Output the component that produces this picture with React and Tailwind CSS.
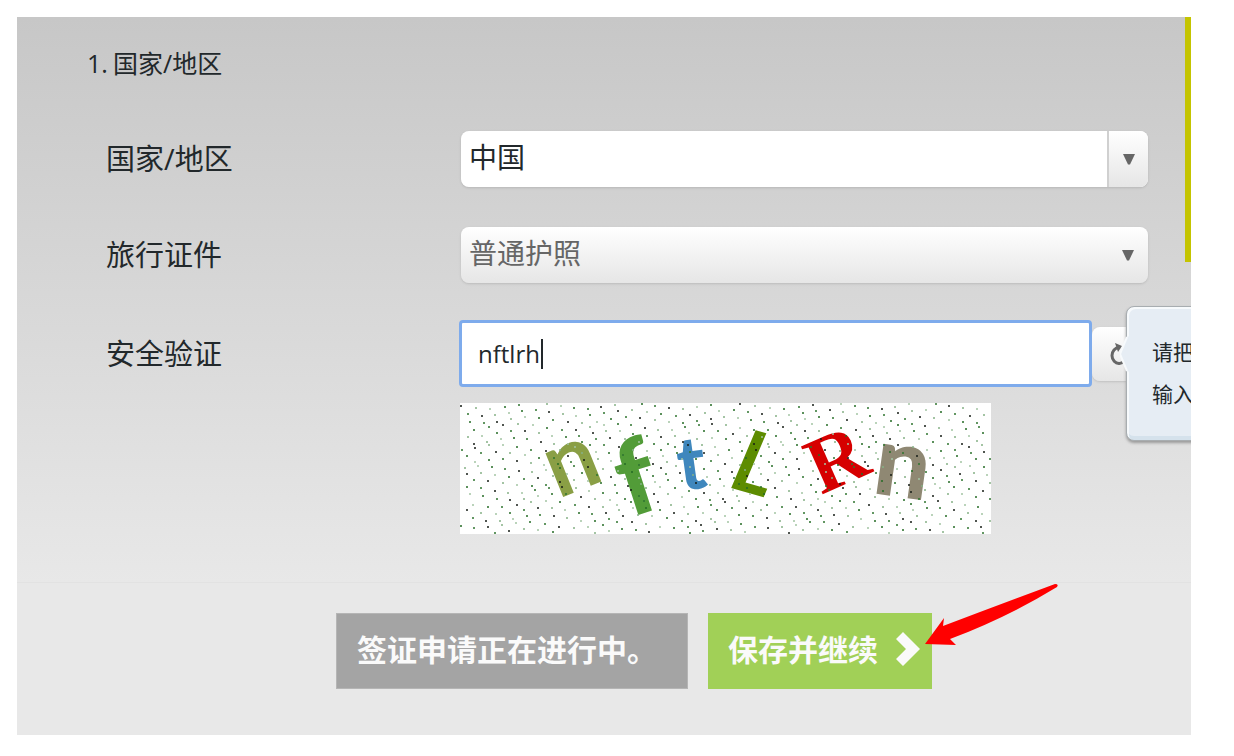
// App.jsx
import { useState } from "react";

/* ================= CAPTCHA ================= */

const LETTERS = [
  { char: "n", x: 98, y: 96, size: 92, angle: -22, color: "#8a9f45", font: "Lato", weight: 700 },
  { char: "f", x: 169, y: 115, size: 104, angle: -18, color: "#529c38", font: "Lato", weight: 900 },
  { char: "t", x: 221, y: 88, size: 74, angle: -8, color: "#3f87bd", font: "Lato", weight: 900 },
  { char: "L", x: 268, y: 84, size: 86, angle: 16, color: "#5d8c00", font: "Lato", weight: 700, italic: true },
  { char: "R", x: 361, y: 92, size: 80, angle: -24, color: "#d60000", font: "Liberation Serif", weight: 700 },
  { char: "n", x: 411, y: 90, size: 98, angle: 8, color: "#8f8873", font: "Lato", weight: 900 },
];

const DOT_COLORS = ["#161c16", "#256b25", "#86b086", "#2f742f", "#a3c4a3"];

const DOTS = [];
for (let row = 0; row < 19; row++) {
  for (let col = -1; col < 39; col++) {
    const x = Math.round(col * 14 + ((row * 5) % 14) + Math.sin(row * 1.7 + col * 0.3) * 2);
    const y = Math.round(row * 7 + 2 + Math.sin(col * 0.9 + row * 0.4) * 3);
    if (x >= 0 && x < 530 && y >= 0 && y < 130) {
      DOTS.push({ x, y, color: DOT_COLORS[(row * 3 + col * 2 + 10) % 5] });
    }
  }
}

function Captcha() {
  return (
    <svg
      viewBox="0 0 531 131"
      className="block w-[531px] max-w-full bg-white"
      role="img"
      aria-label="安全验证"
    >
      {LETTERS.map((l, i) => (
        <text
          key={i}
          x={l.x}
          y={l.y}
          fontSize={l.size}
          fontWeight={l.weight}
          fontStyle={l.italic ? "italic" : "normal"}
          fontFamily={l.font}
          fill={l.color}
          transform={`rotate(${l.angle} ${l.x} ${l.y})`}
        >
          {l.char}
        </text>
      ))}
      {DOTS.map((d, i) => (
        <circle key={i} cx={d.x + 1} cy={d.y + 1} r="1" fill={d.color} />
      ))}
    </svg>
  );
}

/* ================= ICONS ================= */

function Caret() {
  return (
    <svg viewBox="0 0 12 11" className="w-3" aria-hidden="true">
      <path d="M0 0h12L7 10.500h-2z" fill="#666" />
    </svg>
  );
}

function RefreshIcon() {
  return (
    <svg viewBox="0 0 22 22" className="w-[22px]" fill="none" aria-hidden="true">
      <path d="M10 4.500A7 8 0 1 0 17 12" stroke="#666" strokeWidth="3" />
      <path d="M6 0l7 3L9 9z" fill="#666" />
    </svg>
  );
}

function RedArrow() {
  return (
    <svg
      viewBox="0 0 135 63"
      className="pointer-events-none absolute -top-[30px] left-[216px] w-[135px]"
      aria-hidden="true"
    >
      <path d="M1 61L20 35L19 43Q72 23 131 1Q135 1 133 4Q84 34 26 56L32 62Z" fill="#f00" />
    </svg>
  );
}

/* ================= FORM ================= */

function Row({ id, label, children }) {
  return (
    <div className="grid grid-cols-[355px_1fr] items-center">
      <label htmlFor={id} className="text-[29px] leading-9">
        {label}
      </label>
      {children}
    </div>
  );
}

export default function App() {
  const [country, setCountry] = useState("中国");
  const [travelDoc, setTravelDoc] = useState("普通护照");
  const [code, setCode] = useState("nftlrh");

  return (
    <div className="bg-white pt-[17px] pr-[43px] pb-[21px] pl-[17px] font-['Open_Sans','Noto_Sans_CJK_SC',sans-serif] text-[#22282b]">
      <main className="relative overflow-hidden bg-[#e8e8e8]">
        <section className="bg-linear-to-b from-[#c7c7c7] to-[#e8e8e8] pt-7 pr-[43px] pb-12 pl-[89px]">
          <h1 className="-ml-[19px] flex text-[25px] leading-9 font-normal">
            <span className="w-[26px]">1.</span>国家/地区
          </h1>

          <div className="mt-[50px]">
            <Row id="country" label="国家/地区">
              <div className="relative flex h-14 overflow-hidden rounded-lg shadow-sm">
                <select
                  id="country"
                  value={country}
                  onChange={(e) => setCountry(e.target.value)}
                  className="w-full appearance-none bg-white pb-1 pl-2 text-[28px] leading-9 outline-none"
                >
                  <option>中国</option>
                </select>
                <span className="pointer-events-none absolute inset-y-0 right-0 flex w-[41px] items-center justify-center border-l-2 border-[#d0d0d0] bg-linear-to-b from-white to-[#e6e6e6]">
                  <Caret />
                </span>
              </div>
            </Row>
          </div>

          <div className="mt-10">
            <Row id="travel-doc" label="旅行证件">
              <div className="relative flex h-14 overflow-hidden rounded-lg shadow-sm">
                <select
                  id="travel-doc"
                  value={travelDoc}
                  onChange={(e) => setTravelDoc(e.target.value)}
                  className="w-full appearance-none bg-linear-to-b from-white to-[#e6e6e6] pb-1 pl-2 text-[28px] leading-9 text-[#666] outline-none"
                >
                  <option>普通护照</option>
                </select>
                <span className="pointer-events-none absolute inset-y-0 right-0 flex w-10 items-center justify-center">
                  <Caret />
                </span>
              </div>
            </Row>
          </div>

          <div className="mt-[37px]">
            <Row id="code" label="安全验证">
              <div className="-ml-0.5 flex items-center">
                <div className="relative flex-1">
                  <input
                    id="code"
                    type="text"
                    value={code}
                    onChange={(e) => setCode(e.target.value)}
                    className="block h-[67px] w-full rounded-sm border-3 border-[#7eabec] bg-white pl-4 text-2xl outline-none"
                  />
                  <span className="absolute top-[19px] left-[82px] h-[30px] w-0.5 bg-[#22282b]" />
                </div>
                <button
                  type="button"
                  aria-label="刷新"
                  className="flex h-[54px] w-14 items-center rounded-lg bg-linear-to-b from-white to-[#e6e6e6] pl-[17px] shadow-sm"
                >
                  <RefreshIcon />
                </button>
              </div>
            </Row>
          </div>

          <div className="mt-4 pl-[354px]">
            <Captcha />
          </div>
        </section>

        {/* ACTIONS */}
        <footer className="flex justify-center gap-5 border-t border-[#e2e2e2] pt-[30px] pb-[46px] pl-[60px]">
          <button
            type="button"
            className="h-[76px] w-[352px] border border-[#b5b5b5] bg-[#a4a4a4] pb-1 pl-5 text-left text-[30px] font-bold text-[#fafafa]"
          >
            签证申请正在进行中。
          </button>
          <div className="relative">
            <button
              type="button"
              className="flex h-[76px] w-[224px] items-center gap-[18px] bg-[#a1d057] pb-1 pl-5 text-[30px] font-bold text-[#fafafa]"
            >
              保存并继续
              <svg viewBox="0 0 24 34" className="w-6" aria-hidden="true">
                <path d="M7 0L24 17L7 34L0 27L10 17L0 7Z" fill="#fafafa" />
              </svg>
            </button>
            <RedArrow />
          </div>
        </footer>

        <div className="absolute top-0 right-0 h-[245px] w-1.5 bg-[#c4c400]" />

        {/* TOOLTIP */}
        <div
          role="tooltip"
          className="absolute top-[289px] -right-[200px] h-[135px] w-[265px] rounded-lg border border-[#a8adb0] bg-[#e6edf4] pt-6 pl-[25px] text-[21px] leading-[42px] shadow-[inset_2px_2px_0_#f7fafc,inset_0_-4px_0_#d5e2ec,0_2px_3px_#999]"
        >
          <svg
            viewBox="0 0 10 36"
            className="absolute top-[29px] -left-[7px] w-2.5"
            aria-hidden="true"
          >
            <path d="M10 0L7 1L0 18L7 35L10 36Z" fill="#e6edf4" />
            <path d="M7 1L0 18L7 35" fill="none" stroke="#f7fafc" strokeWidth="2" />
          </svg>
          <p>请把</p>
          <p>输入</p>
        </div>
      </main>
    </div>
  );
}
